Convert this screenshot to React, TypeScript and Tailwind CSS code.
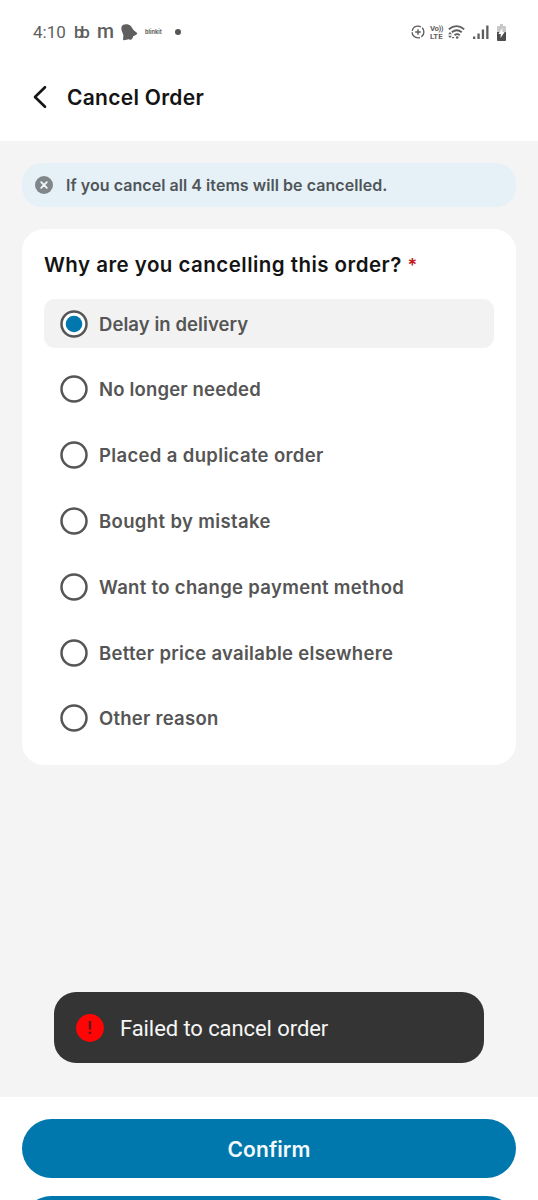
import { useState } from "react";
import clsx from "clsx";

const reasons = [
  { label: "Delay in delivery", tracking: "tracking-[0.07px]" },
  { label: "No longer needed", tracking: "tracking-[0.17px]" },
  { label: "Placed a duplicate order", tracking: "tracking-[0.35px]" },
  { label: "Bought by mistake", tracking: "tracking-[0.36px]" },
  { label: "Want to change payment method", tracking: "tracking-[0.32px]" },
  { label: "Better price available elsewhere", tracking: "tracking-[0.29px]" },
  { label: "Other reason", tracking: "tracking-[0.25px]" },
];

function StatusBar() {
  return (
    <div className="flex h-16 items-center pr-8 pl-[33px] font-[Roboto,sans-serif] text-[#5f5f5f]">
      <span className="w-[41px] text-[17px] leading-none">4:10</span>
      <span className="w-[23px] text-[17px] leading-none font-medium tracking-[-3.4px]">bb</span>
      <span className="w-6 text-[19.5px] leading-none font-medium">m</span>
      {/* Bell */}
      <svg className="h-[17px] w-[17px]" viewBox="0 0 17 17" fill="currentColor">
        <path d="M2.300.8C4.500-.3 8 0 10 2.200L12.500 6L15.800 8.800Q16.600 9.500 15.500 10.400L12 12.500A2.900 2.900 0 0 1 7.700 15.300L3 16.300Q2 16.400 2.100 15.300L2.400 11.300L.8 6.800C0 4.500.1 2 2.300.8Z" />
      </svg>
      <span className="ml-[7px] w-[30px] translate-y-[1px] font-[Inter,sans-serif] text-[5.6px] leading-none font-bold">blinkit</span>
      <span className="h-1.5 w-1.5 rounded-full bg-[#555]" />

      <div className="ml-auto flex items-center">
        <svg className="mr-[5px] h-[14px] w-[14px]" viewBox="0 0 14 14" fill="none" stroke="currentColor" strokeWidth="1.400">
          <circle cx="7" cy="7" r="5.900" strokeDasharray="10.860 1.500" strokeDashoffset="5.430" />
          <path d="M7 4.200v5.600M4.200 7h5.600" />
        </svg>
        <span className="flex w-[15px] flex-col text-[7.8px] leading-[9px] font-bold">
          <span className="h-[8px] tracking-[-0.4px] whitespace-nowrap">Vo))</span>
          <span className="h-[9px] whitespace-nowrap">LTE</span>
        </span>
        <svg className="ml-[3px] h-[14px] w-[17px]" viewBox="0 0 17 14" fill="none" stroke="currentColor" strokeWidth="1.800">
          <path d="M.8 4.200Q8.500-2 16.200 4.200M3.800 7.300Q8.800 3.300 13.800 7.300M6.500 10.200Q9.200 8.100 11.700 10.200" />
          <circle cx="9.200" cy="12.500" r="1.300" fill="currentColor" stroke="none" />
          <path d="M2 6.900 3.900 9.300H.1zM2 13.100.1 10.700h3.800zM5 13.800 3.600 12h2.800z" fill="currentColor" stroke="none" />
        </svg>
        <svg className="ml-[8px] h-[15px] w-4" viewBox="0 0 16 15" fill="currentColor">
          <path d="M0 11.500h2.300V14H0zM4.400 8.500h2.300V14H4.400zM8.800 4.500h2.300V14H8.800zM13.200.5h2.300V14h-2.300z" />
        </svg>
        <svg className="ml-[8px] h-[17px] w-[9px]" viewBox="0 0 9 17">
          <path d="M3 0h3v2h2q1 0 1 1v5H0V3q0-1 1-1h2z" fill="#c7c7c7" />
          <path d="M0 8h9v8q0 1-1 1H1q-1 0-1-1z" fill="#4d4d4d" />
          <path d="M5.500 4 1.300 10h2.500L3.500 14 7.700 8H5.300z" fill="#fff" />
        </svg>
      </div>
    </div>
  );
}

function Toast() {
  return (
    <div className="absolute top-[992px] left-[54px] flex h-[71px] w-[430px] items-center rounded-[22px] bg-[#343434] pl-[22px]">
      <svg className="h-7 w-7" viewBox="0 0 28 28">
        <circle cx="14" cy="14" r="13.900" fill="#ff0505" />
        <path d="M12.800 7h2.400v8.500h-2.400zM12.800 17.700h2.400v2.400h-2.400z" fill="#5a1a1a" />
      </svg>
      <span className="mt-[2px] ml-4 font-[Roboto,sans-serif] text-[22px] leading-none tracking-[-0.08px] text-[#f5f5f5]">
        Failed to cancel order
      </span>
    </div>
  );
}

export default function App() {
  const [selected, setSelected] = useState(0);

  return (
    <div className="relative flex h-[1200px] w-[538px] flex-col overflow-hidden bg-[#f4f4f4] font-[Inter,sans-serif]">
      <header className="h-[141px] shrink-0 bg-white">
        <StatusBar />
        <div className="flex h-[66px] items-center pl-[33px]">
          <svg className="h-6 w-[14px]" viewBox="0 0 14 24" fill="none" stroke="#141414" strokeWidth="2.600" strokeLinecap="round" strokeLinejoin="round">
            <path d="M12 2.200 2 12l10 9.800" />
          </svg>
          <h1 className="ml-[20px] text-[21px] leading-none font-semibold tracking-[0.28px] text-[#141414]">Cancel Order</h1>
        </div>
      </header>

      <main className="flex-1 px-[22px] pt-[22.4px]">
        <div className="flex h-[44px] items-center rounded-[20px] bg-[#e5f1f7] pl-[13px]">
          <svg className="h-[18px] w-[18px]" viewBox="0 0 18 18">
            <circle cx="9" cy="9" r="9" fill="#80868a" />
            <path d="m6.200 6.200 5.600 5.600m0-5.600-5.600 5.600" stroke="#eef5f8" strokeWidth="1.900" strokeLinecap="round" />
          </svg>
          <p className="ml-[13px] text-[16px] leading-none font-semibold tracking-[0.05px] text-[#505559]">
            If you cancel all 4 items will be cancelled.
          </p>
        </div>

        <section className="mt-[21.6px] h-[536px] rounded-[22px] bg-white px-[22px] pt-[22px]">
          <h2 className="h-[48px] text-[20.5px] leading-[28px] font-semibold tracking-[0.46px] whitespace-nowrap text-[#141414]">
            Why are you cancelling this order? <span className="text-[18px] leading-none text-[#c4161c]">*</span>
          </h2>
          <div className="flex flex-col gap-[16.5px]">
            {reasons.map((reason, i) => (
              <button
                key={reason.label}
                onClick={() => setSelected(i)}
                className={clsx(
                  "flex h-[49.3px] items-center rounded-[11px] pl-4 text-left",
                  selected === i && "bg-[#f2f2f2]"
                )}
              >
                <svg className="h-7 w-7 shrink-0" viewBox="0 0 28 28">
                  <circle cx="14" cy="14" r="12.500" fill="#fff" stroke="#555" strokeWidth="2.500" />
                  {selected === i && <circle cx="14" cy="14" r="8.300" fill="#0078ad" />}
                </svg>
                <span className={clsx("ml-[11px] pt-[0.5px] text-[18.5px] leading-none font-semibold whitespace-nowrap text-[#555]", reason.tracking)}>
                  {reason.label}
                </span>
              </button>
            ))}
          </div>
        </section>
      </main>

      <footer className="h-[103px] shrink-0 bg-white px-[22px] pt-[22px]">
        <button className="flex h-[59px] w-full items-center justify-center rounded-full bg-[#0078ad] pt-[2px] text-[21px] font-semibold tracking-[0.1px] text-[#f4fafd]">
          Confirm
        </button>
        <div className="mt-[17.5px] h-[59px] rounded-full bg-[#0078ad]" />
      </footer>

      <Toast />
    </div>
  );
}
